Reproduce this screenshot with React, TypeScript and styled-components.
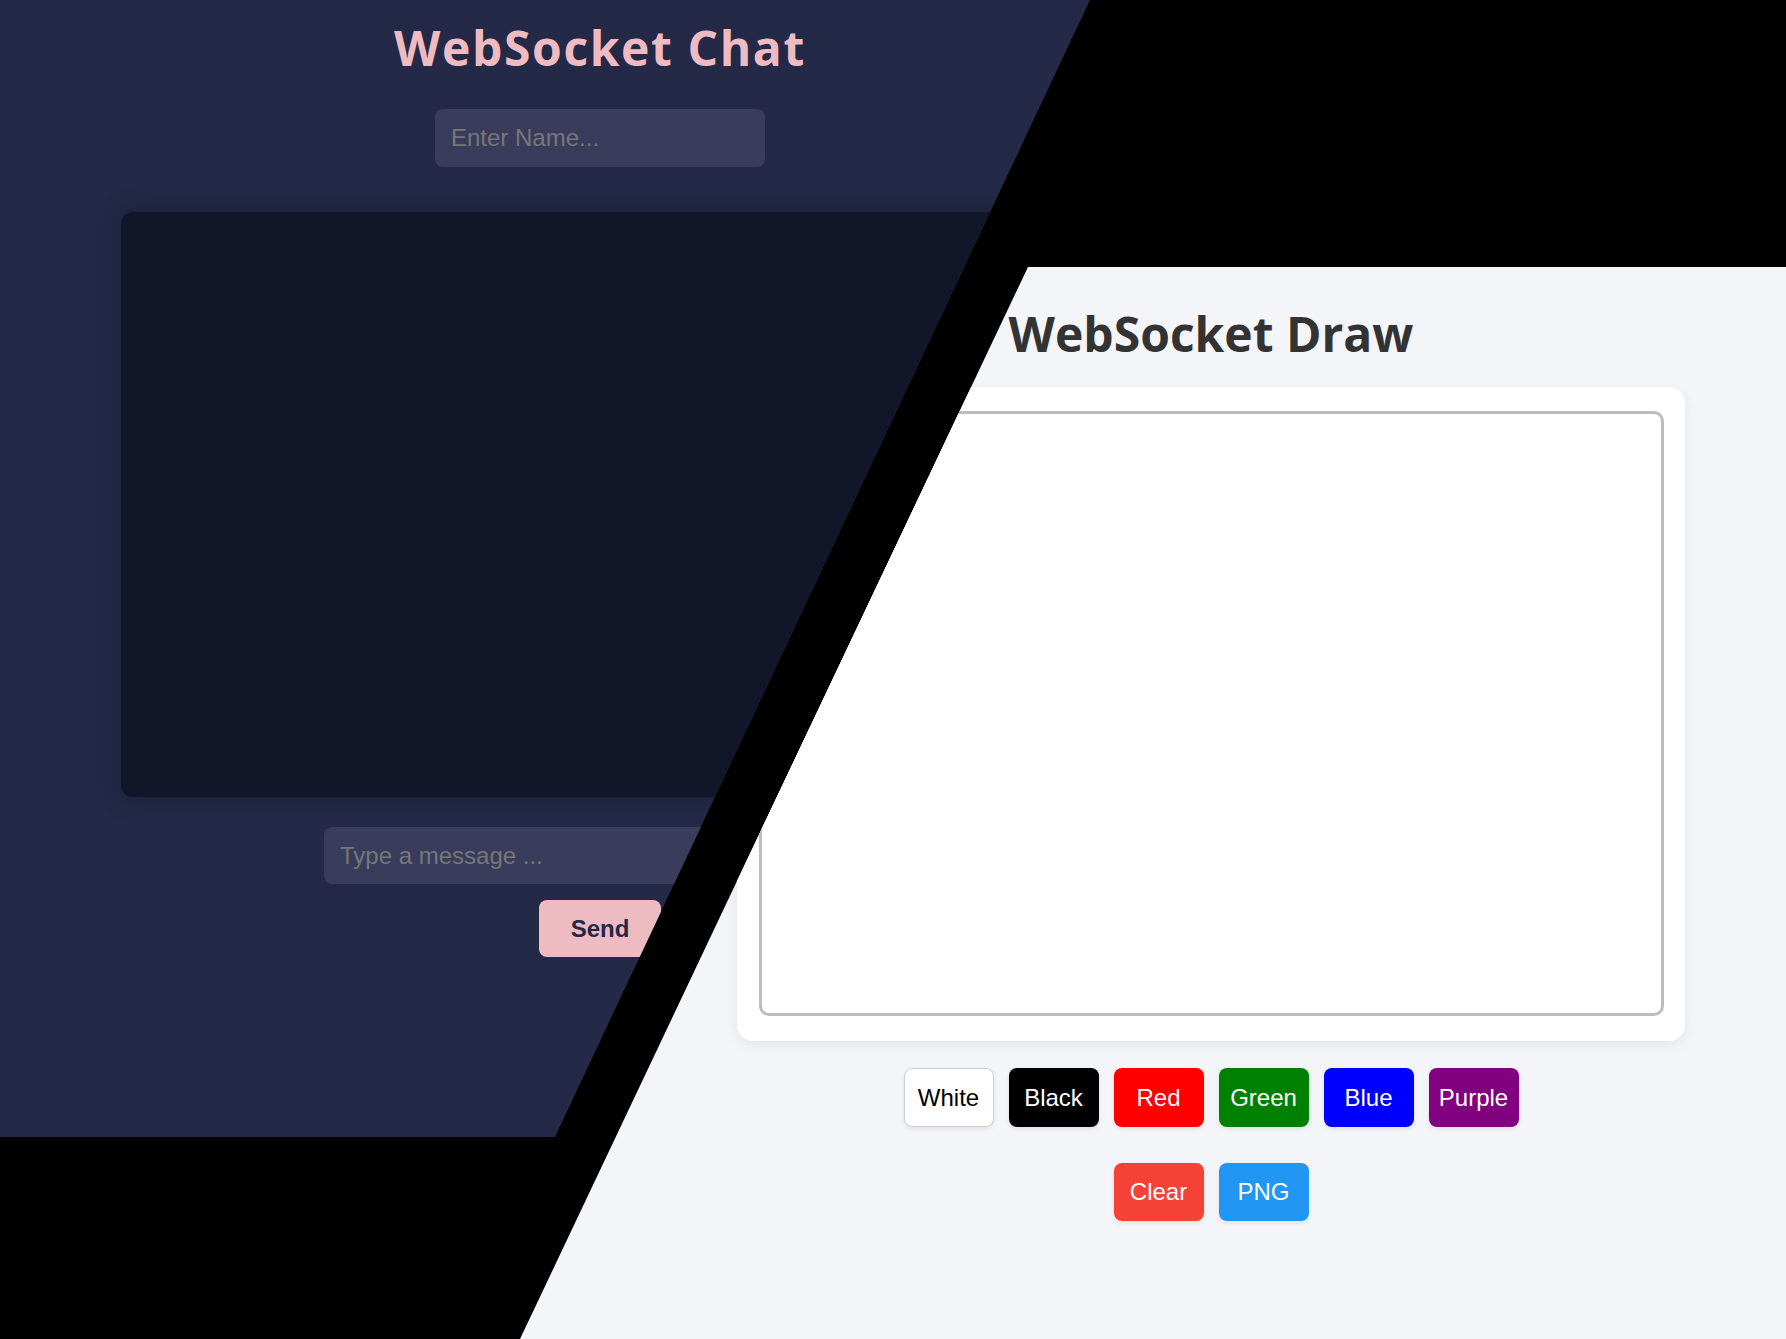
import React, { useState } from 'react';
import styled, { createGlobalStyle } from 'styled-components';

const GlobalStyle = createGlobalStyle`
  html, body {
    margin: 0;
    padding: 0;
    background: #000;
  }
  * {
    box-sizing: border-box;
  }
`;

const Stage = styled.main`
  display: grid;
  width: 1786px;
  height: 1339px;
  overflow: hidden;
  background: #000;
`;

/* ---------- chat screenshot ---------- */

const ChatPage = styled.section`
  grid-area: 1 / 1;
  width: 1200px;
  height: 1137px;
  display: flex;
  flex-direction: column;
  align-items: center;
  padding-top: 24px;
  background: #232946;
  clip-path: polygon(0 0, 1090px 0, 555px 1137px, 0 1137px);
`;

const ChatTitle = styled.h1`
  margin: 0;
  font-family: 'Open Sans', 'Noto Sans', sans-serif;
  font-size: 48px;
  line-height: 48px;
  font-weight: 700;
  letter-spacing: 1.6px;
  color: #eebbc3;
`;

const DarkInput = styled.input<{ $width: number }>`
  width: ${(p) => p.$width}px;
  height: 57px;
  padding: 0 16px;
  border: none;
  border-radius: 8px;
  background: #3a3c5b;
  color: #fffffe;
  font-family: 'Liberation Sans', Arial, sans-serif;
  font-size: 24px;
  outline: none;

  &::placeholder {
    color: #77777a;
  }
`;

const NameInput = styled(DarkInput)`
  margin-top: 37px;
  height: 58px;
`;

const Messages = styled.div`
  margin-top: 45px;
  width: 958px;
  height: 585px;
  border-radius: 12px;
  background: #121629;
  box-shadow: 0 0 28px rgba(0, 0, 0, 0.22);
`;

const MessageInput = styled(DarkInput)`
  margin-top: 30px;
`;

const SendButton = styled.button`
  margin-top: 16px;
  width: 122px;
  height: 57px;
  border: none;
  border-radius: 8px;
  background: #eebbc3;
  color: #232946;
  font-family: 'Liberation Sans', Arial, sans-serif;
  font-size: 24px;
  font-weight: 700;
  cursor: pointer;
`;

/* ---------- draw screenshot ---------- */

const DrawPage = styled.section`
  grid-area: 1 / 1;
  justify-self: end;
  align-self: end;
  width: 1266px;
  height: 1072px;
  display: flex;
  flex-direction: column;
  align-items: center;
  padding: 43px 0 0 116px;
  background: #f4f5f9;
  clip-path: polygon(508px 0, 100% 0, 100% 100%, 0 100%);
`;

const DrawTitle = styled.h1`
  margin: 0;
  font-family: 'Open Sans', 'Noto Sans', sans-serif;
  font-size: 48px;
  line-height: 48px;
  font-weight: 700;
  color: #333;
`;

const Card = styled.div`
  margin-top: 29px;
  width: 948px;
  padding: 24px 22px 25px;
  border-radius: 16px;
  background: #fff;
  box-shadow: 0 4px 14px rgba(0, 0, 0, 0.07);
`;

const Board = styled.canvas`
  display: block;
  width: 905px;
  height: 605px;
  border: 3px solid #bdbdbd;
  border-radius: 10px;
  background: #fff;
`;

const ButtonRow = styled.div<{ $gapTop: number }>`
  display: flex;
  gap: 15px;
  margin-top: ${(p) => p.$gapTop}px;
`;

const ToolButton = styled.button<{ $bg: string; $fg: string; $outlined?: boolean; $short?: boolean }>`
  width: 90px;
  height: ${(p) => (p.$short ? 58 : 59)}px;
  border: ${(p) => (p.$outlined ? '1px solid #cfcfcf' : 'none')};
  border-radius: 8px;
  background: ${(p) => p.$bg};
  color: ${(p) => p.$fg};
  font-family: 'Liberation Sans', Arial, sans-serif;
  font-size: 24px;
  box-shadow: 0 2px 5px rgba(0, 0, 0, 0.08);
  cursor: pointer;
`;

const colors = [
  { name: 'White', bg: '#ffffff', fg: '#000000', outlined: true },
  { name: 'Black', bg: '#000000', fg: '#ffffff' },
  { name: 'Red', bg: '#ff0000', fg: '#ffffff' },
  { name: 'Green', bg: '#008000', fg: '#ffffff' },
  { name: 'Blue', bg: '#0000ff', fg: '#ffffff' },
  { name: 'Purple', bg: '#800080', fg: '#ffffff' },
];

const App: React.FC = () => {
  const [name, setName] = useState('');
  const [message, setMessage] = useState('');
  const [, setColor] = useState('black');

  return (
    <>
      <GlobalStyle />
      <Stage>
        <ChatPage>
          <ChatTitle>WebSocket Chat</ChatTitle>
          <NameInput
            $width={330}
            placeholder='Enter Name...'
            value={name}
            onChange={(e) => setName(e.target.value)}
          />
          <Messages />
          <MessageInput
            $width={552}
            placeholder='Type a message ...'
            value={message}
            onChange={(e) => setMessage(e.target.value)}
          />
          <SendButton>Send</SendButton>
        </ChatPage>

        <DrawPage>
          <DrawTitle>WebSocket Draw</DrawTitle>
          <Card>
            <Board width={899} height={599} />
          </Card>
          <ButtonRow $gapTop={27}>
            {colors.map((c) => (
              <ToolButton
                key={c.name}
                $bg={c.bg}
                $fg={c.fg}
                $outlined={c.outlined}
                onClick={() => setColor(c.name.toLowerCase())}
              >
                {c.name}
              </ToolButton>
            ))}
          </ButtonRow>
          <ButtonRow $gapTop={36}>
            <ToolButton $bg='#f44336' $fg='#ffffff' $short>
              Clear
            </ToolButton>
            <ToolButton $bg='#2196f3' $fg='#ffffff' $short>
              PNG
            </ToolButton>
          </ButtonRow>
        </DrawPage>
      </Stage>
    </>
  );
};

export default App;
